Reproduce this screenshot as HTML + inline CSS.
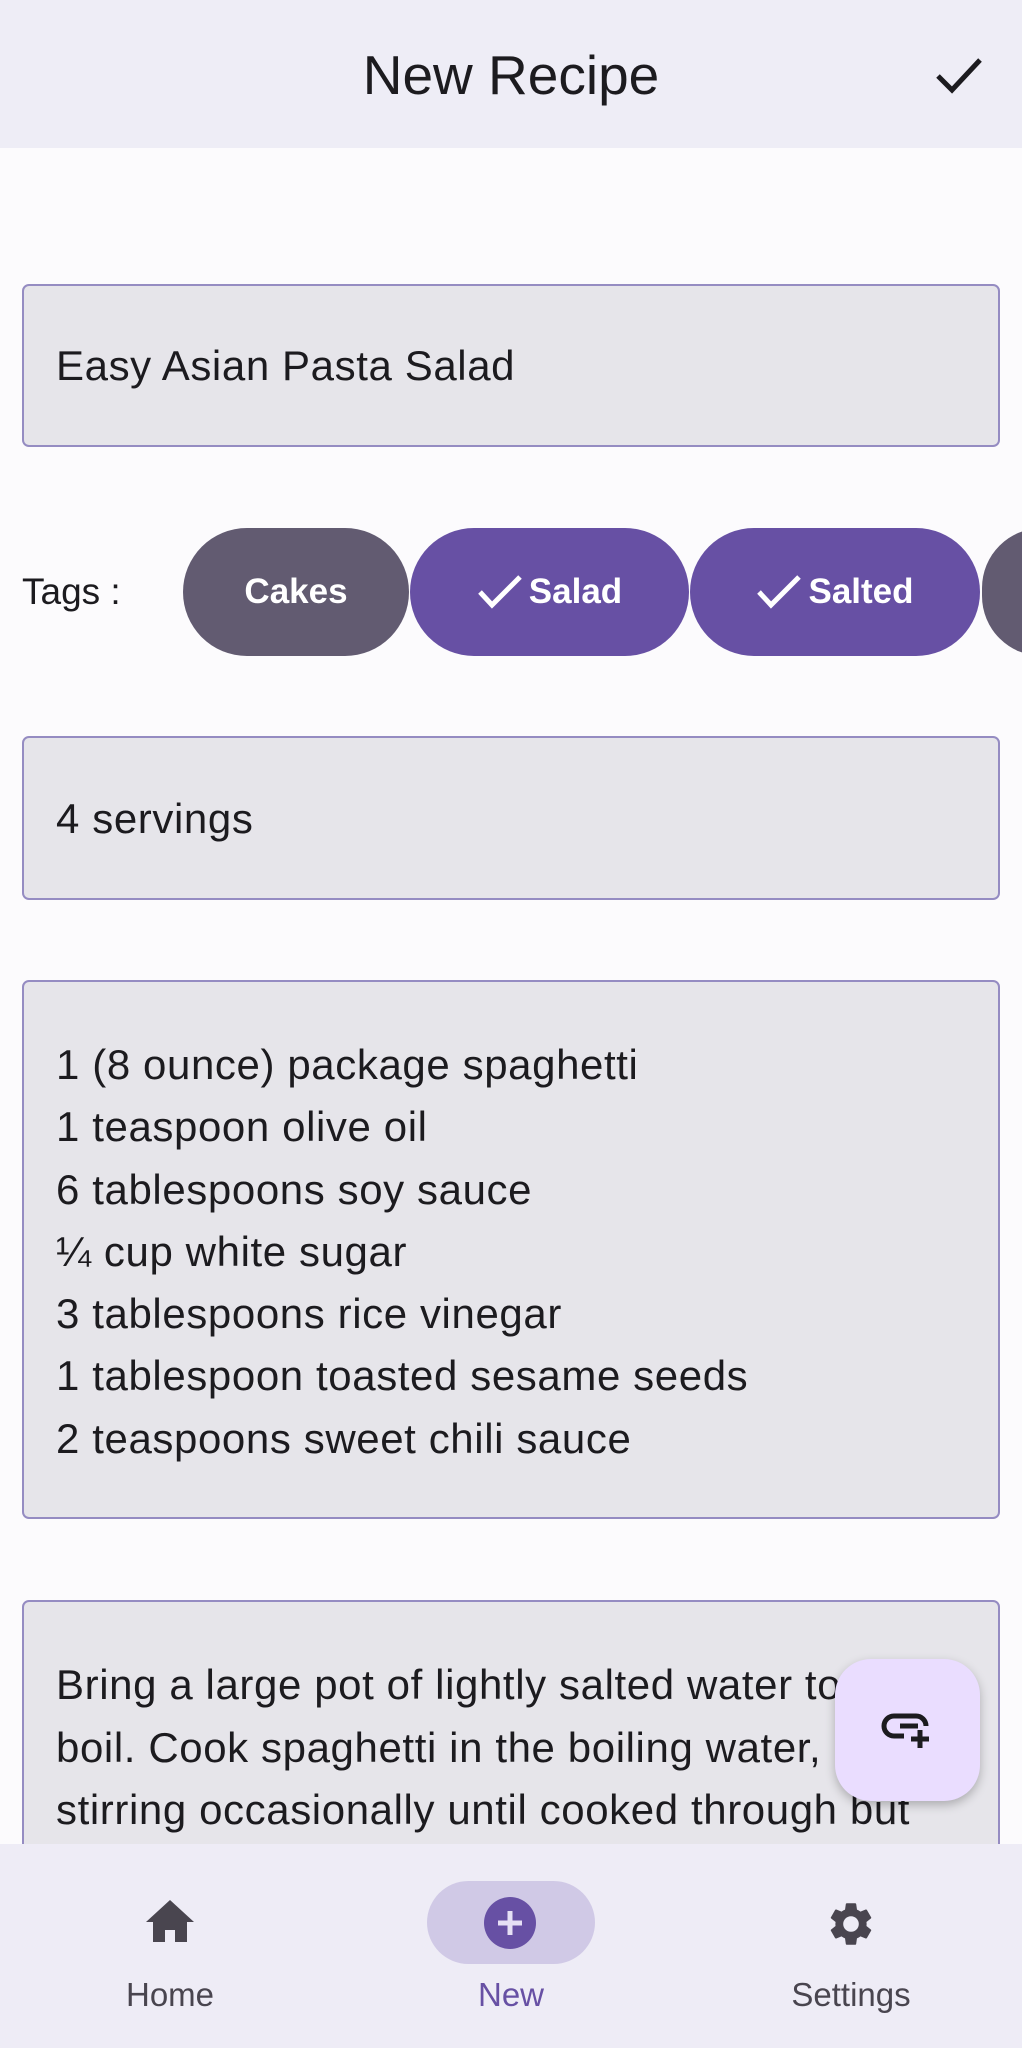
<!DOCTYPE html>
<html><head><meta charset="utf-8"><style>
*{box-sizing:border-box;margin:0;padding:0}
html,body{width:1022px;height:2048px;overflow:hidden}
body{background:#fcfbfd;font-family:"Liberation Sans",sans-serif;color:#1c1b1f;position:relative}
.bar{position:absolute;left:0;top:0;width:1022px;height:148px;background:#eeedf6}
.title{position:absolute;left:0;width:1022px;top:44px;text-align:center;font-size:55px;line-height:62px}
.field{position:absolute;left:22px;width:978px;background:#e6e5ea;border:2px solid #958cc2;border-radius:7px;overflow:hidden}
.ft{position:absolute;left:32px;font-size:42px;letter-spacing:0.6px;white-space:nowrap}
.chip{position:absolute;top:528px;height:128px;border-radius:64px;color:#fff;font-size:35px;font-weight:bold;display:flex;align-items:center;justify-content:center}
.nav{position:absolute;left:0;top:1844px;width:1022px;height:204px;background:#eeecf6}
.lbl{position:absolute;top:1976px;font-size:33px;color:#49454f;transform:translateX(-50%)}
</style></head><body>
<div class="bar"></div>
<div class="title">New Recipe</div>
<svg style="position:absolute;left:934px;top:52px" width="50" height="46" viewBox="0 0 50 46"><path d="M4 24 L18 38 L46 8" fill="none" stroke="#1c1b1f" stroke-width="5"/></svg>

<div class="field" style="top:284px;height:163px"><div class="ft" style="top:56px">Easy Asian Pasta Salad</div></div>

<div style="position:absolute;left:22px;top:571px;font-size:37px">Tags :</div>
<div class="chip" style="left:183px;width:226px;background:#625b71">Cakes</div>
<div class="chip" style="left:410px;width:279px;background:#6750a4"><svg width="46" height="36" viewBox="0 0 46 36" style="margin-right:6px"><path d="M3 18 L15 31 L43 3" fill="none" stroke="#fff" stroke-width="5"/></svg>Salad</div>
<div class="chip" style="left:690px;width:290px;background:#6750a4"><svg width="46" height="36" viewBox="0 0 46 36" style="margin-right:6px"><path d="M3 18 L15 31 L43 3" fill="none" stroke="#fff" stroke-width="5"/></svg>Salted</div>
<div class="chip" style="left:982px;width:120px;background:#625b71"></div>

<div class="field" style="top:736px;height:164px"><div class="ft" style="top:57px">4 servings</div></div>

<div class="field" style="top:980px;height:539px">
<div class="ft" style="top:52px;line-height:62.3px">1 (8 ounce) package spaghetti<br>1 teaspoon olive oil<br>6 tablespoons soy sauce<br>¼ cup white sugar<br>3 tablespoons rice vinegar<br>1 tablespoon toasted sesame seeds<br>2 teaspoons sweet chili sauce</div>
</div>

<div class="field" style="top:1600px;height:420px">
<div class="ft" style="top:52px;line-height:62.5px">Bring a large pot of lightly salted water to a<br>boil. Cook spaghetti in the boiling water,<br>stirring occasionally until cooked through but</div>
</div>

<div style="position:absolute;left:835px;top:1659px;width:145px;height:142px;border-radius:36px;background:#eaddff;box-shadow:0 4px 10px rgba(0,0,0,0.25)"></div>
<svg style="position:absolute;left:880px;top:1710px" width="56" height="46" viewBox="0 0 56 46"><path d="M30 6 H14 A10 10 0 0 0 14 26 H24 M20 16 H38 M30 6 H36 A10 10 0 0 1 46 16" fill="none" stroke="#1c1b1f" stroke-width="5"/><path d="M40 20 V38 M31 29 H49" stroke="#1c1b1f" stroke-width="5"/></svg>

<div class="nav"></div>
<svg style="position:absolute;left:144px;top:1898px" width="52" height="46" viewBox="0 0 52 46"><path d="M26 2 L50 24 H43 V44 H31 V32 H21 V44 H9 V24 H2 Z" fill="#49454f"/></svg>
<div style="position:absolute;left:427px;top:1881px;width:168px;height:83px;border-radius:42px;background:#d0c9e6"></div>
<svg style="position:absolute;left:484px;top:1897px" width="52" height="52" viewBox="0 0 52 52"><circle cx="26" cy="26" r="26" fill="#6750a4"/><path d="M26 14 V38 M14 26 H38" stroke="#e6e0f5" stroke-width="5"/></svg>
<svg style="position:absolute;left:825px;top:1897px" width="52" height="54" viewBox="0 0 24 24"><path fill="#49454f" d="M19.14 12.94c.04-.3.06-.61.06-.94 0-.32-.02-.64-.07-.94l2.030-1.58a.49.49 0 0 0 .12-.61l-1.92-3.32a.49.49 0 0 0-.59-.22l-2.39.96c-.5-.38-1.03-.7-1.62-.94l-.36-2.54a.48.48 0 0 0-.48-.41h-3.84c-.24 0-.43.17-.47.41l-.36 2.54c-.59.24-1.13.57-1.62.94l-2.39-.96a.48.48 0 0 0-.59.22L2.74 8.87a.47.47 0 0 0 .12.61l2.03 1.58c-.05.3-.09.63-.09.94s.02.64.07.94l-2.03 1.58a.49.49 0 0 0-.12.61l1.92 3.32c.12.22.37.29.59.22l2.39-.96c.5.38 1.03.7 1.62.94l.36 2.54c.05.24.24.41.48.41h3.84c.24 0 .44-.17.47-.41l.36-2.54c.59-.24 1.130-.56 1.62-.94l2.39.96c.22.08.47 0 .59-.22l1.92-3.32a.47.47 0 0 0-.12-.61l-2.01-1.580zM12 15.6A3.6 3.6 0 1 1 12 8.4a3.6 3.6 0 0 1 0 7.2z"/></svg>
<div class="lbl" style="left:170px">Home</div>
<div class="lbl" style="left:511px;color:#6750a4">New</div>
<div class="lbl" style="left:851px">Settings</div>
</body></html>
